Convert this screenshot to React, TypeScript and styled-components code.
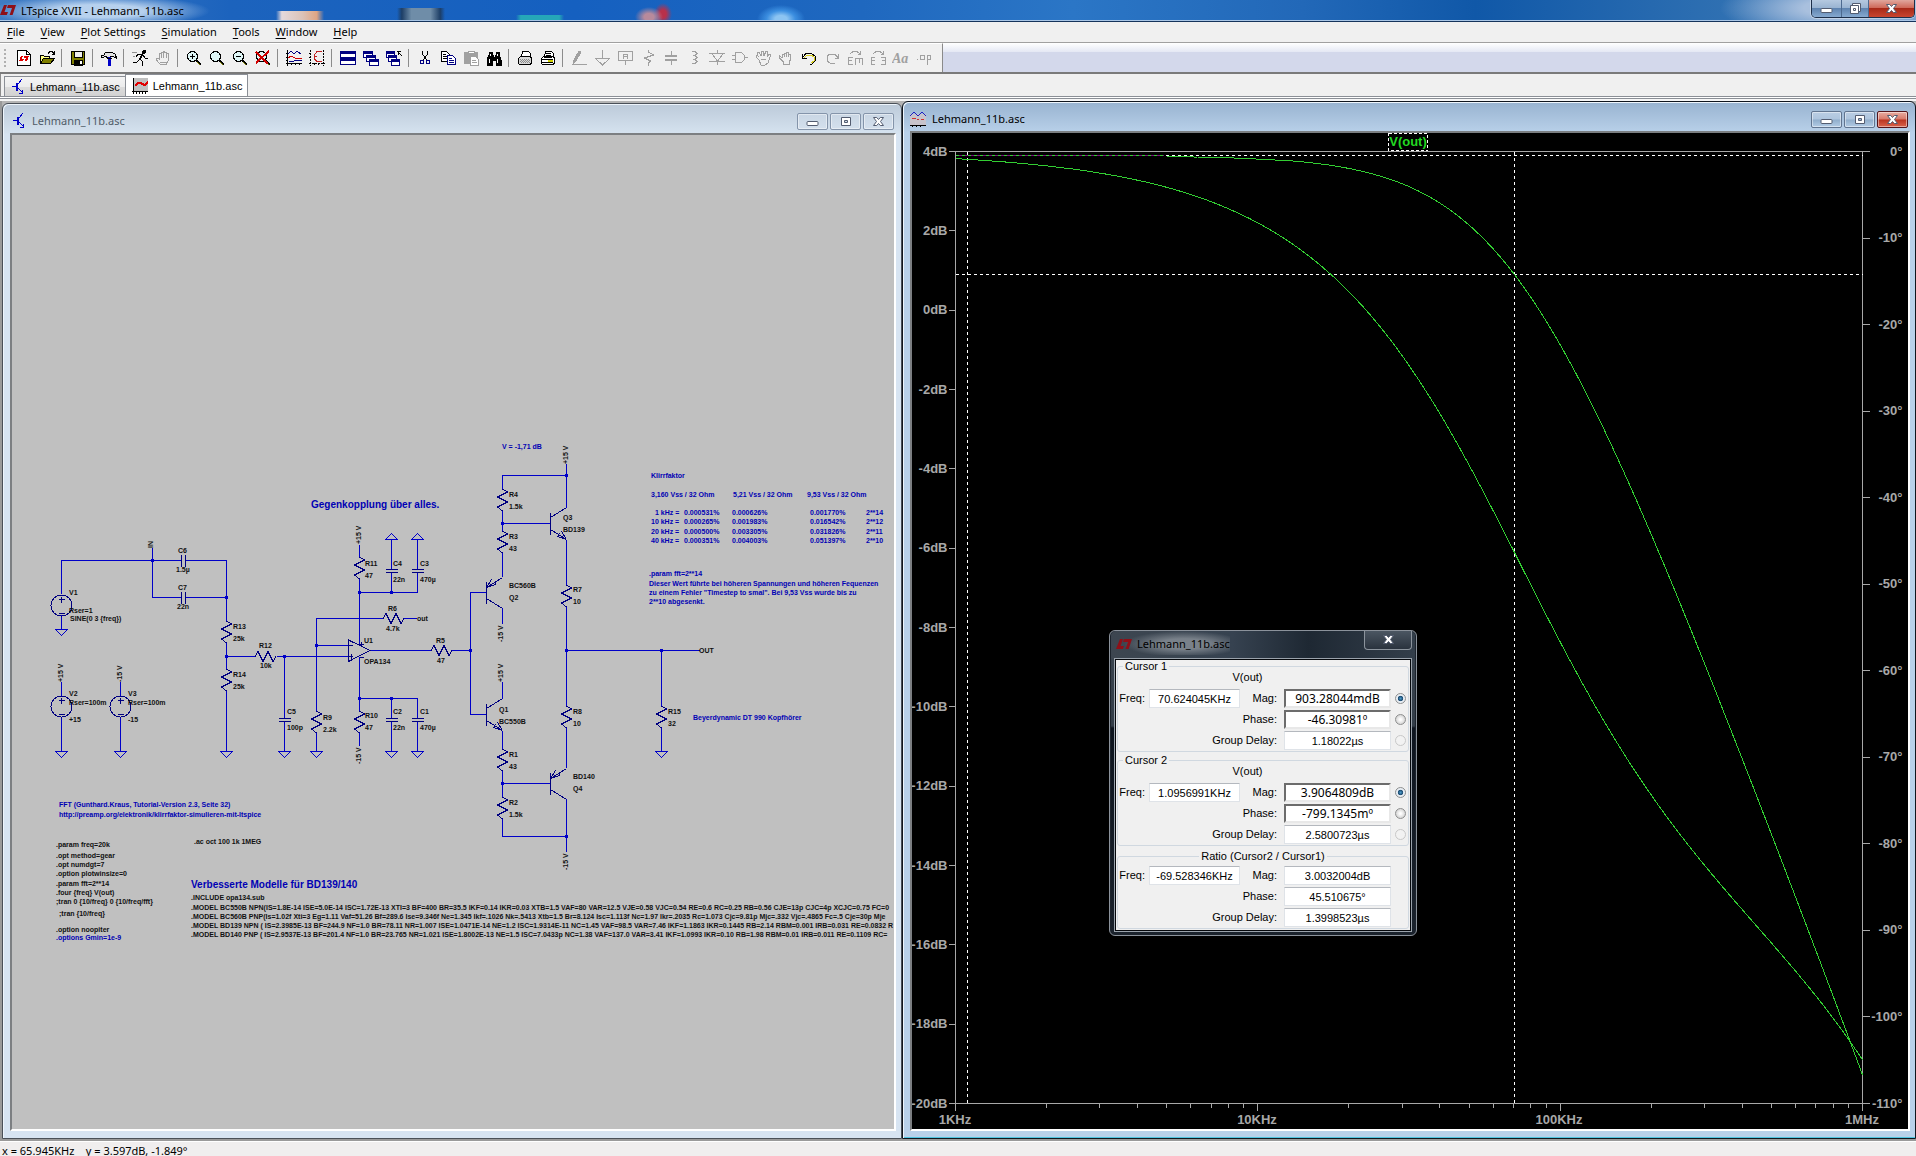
import React, { useLayoutEffect, useRef, useState } from "react";
import styled, { createGlobalStyle, css } from "styled-components";

const ui = `"Noto Sans", "Open Sans", sans-serif`;
const sans = `"Liberation Sans", Arial, sans-serif`;

const Global = createGlobalStyle`
  * { box-sizing: border-box; }
  body { margin: 0; background: #f0f0f0; overflow: hidden; font: 11px/16px ${ui}; color: #000; }
  button, input { font: inherit; color: inherit; margin: 0; }
`;

/* ---------- frame ---------- */

const Shell = styled.div`
  display: flex;
  flex-direction: column;
  height: 100vh;
  background: #f0f0f0;
`;

const TitleBar = styled.header`
  display: flex;
  justify-content: space-between;
  height: 22px;
  flex: none;
  border-bottom: 1px solid #16345c;
  box-shadow: inset 0 -1px 0 #a9c6e6;
  background:
    radial-gradient(ellipse 110px 16px at 100px 11px, rgba(190, 214, 240, 0.95) 40%, rgba(190, 214, 240, 0) 100%),
    linear-gradient(90deg, rgba(225, 215, 220, 0), #e4d9dc 12%, #dcc3b8 55%, #e0a583 85%, rgba(224, 165, 131, 0)) 276px 11px / 48px 9px no-repeat,
    linear-gradient(90deg, rgba(30, 60, 95, 0), #1d3e66 10%, #6f8da8 30%, #6f8da8 70%, #1d3e66 90%, rgba(30, 60, 95, 0)) 397px 8px / 48px 12px no-repeat,
    linear-gradient(90deg, rgba(37, 167, 184, 0), #25a7b8 10%, #25a7b8 90%, rgba(37, 167, 184, 0)) 516px 15px / 48px 5px no-repeat,
    radial-gradient(ellipse 14px 10px at 649px 17px, #b88a9c 35%, rgba(176, 100, 130, 0) 100%),
    radial-gradient(ellipse 9px 11px at 663px 14px, #b8304a 35%, rgba(176, 48, 74, 0) 100%),
    radial-gradient(ellipse 24px 14px at 781px 19px, #8cc4f2 25%, #3b8ee0 60%, rgba(40, 120, 210, 0) 100%),
    radial-gradient(ellipse 120px 30px at 1840px 8px, #a9c0de 30%, rgba(150, 180, 220, 0) 100%),
    linear-gradient(90deg, #3f7cc4 0, #1c63bd 12%, #1560c0 30%, #1f68bf 45%, #2b76c6 56%, #2268b8 68%, #1058a8 77%, #2f70b2 90%, #5d8fc6 100%);
`;

const TitleText = styled.h1`
  display: flex;
  align-items: center;
  gap: 5px;
  margin: 0;
  font: 400 11px/20px ${ui};
`;

const CaptionGroup = styled.div`
  display: flex;
  height: 18px;
  margin-right: 1px;
  border: 1px solid #1d2f4a;
  border-top: 0;
  border-radius: 0 0 5px 5px;
  overflow: hidden;
  box-shadow: 0 0 0 1px rgba(255, 255, 255, 0.35);
`;

const CaptionButton = styled.button<{ $w: number; $danger?: boolean }>`
  display: grid;
  place-items: center;
  width: ${(p) => p.$w}px;
  padding: 0;
  border: 0;
  border-left: 1px solid #4d6a90;
  background: ${(p) =>
    p.$danger
      ? "linear-gradient(#e0a79d 0, #cf6a5a 45%, #a82a18 50%, #c8452f 100%)"
      : "linear-gradient(#b5c9e0 0, #9ab4d2 45%, #5f84b0 50%, #86a9d0 100%)"};
  &:first-child { border-left: 0; }
`;

const MenuBar = styled.nav`
  display: flex;
  gap: 2px;
  height: 21px;
  flex: none;
  border-bottom: 1px solid #a0a0a0;
`;

const MenuItem = styled.button`
  padding: 0 7px;
  border: 0;
  background: none;
  line-height: 18px;
  u { text-underline-offset: 2px; }
`;

const ToolRow = styled.div`
  display: flex;
  height: 31px;
  flex: none;
  border-bottom: 2px solid #7a7a7a;
  background: linear-gradient(#fff 0, #e4e8f4 9px, #d3d8eb 9px, #d3d8eb 100%);
`;

const ToolBar = styled.div`
  display: flex;
  align-items: center;
  padding: 0 7px 0 4px;
  border-top: 1px solid #fff;
  border-right: 1px solid #8a8a8a;
  background: #f0f0f0;
`;

const Grip = styled.span`
  width: 2px;
  height: 18px;
  margin-right: 6px;
  background: repeating-linear-gradient(#b0b0b0 0 2px, transparent 2px 4px);
`;

const ToolButton = styled.button`
  display: grid;
  place-items: center;
  width: 23px;
  height: 22px;
  padding: 0;
  border: 0;
  background: none;
  color: #000;
  &:disabled { color: #a0a0a0; }
`;

const Divider = styled.span`
  width: 1px;
  height: 18px;
  margin: 0 4px 0 3px;
  background: #8c8c8c;
`;

const TabStrip = styled.div`
  display: flex;
  align-items: flex-end;
  height: 23px;
  flex: none;
  padding-left: 3px;
  border-left: 1px solid #8c8c8c;
  border-bottom: 1px solid #8b8f96;
`;

const Tab = styled.button<{ $active?: boolean }>`
  display: flex;
  align-items: center;
  gap: 5px;
  height: ${(p) => (p.$active ? 22 : 20)}px;
  padding: 0 5px 0 6px;
  border: 1px solid #8b8f96;
  border-bottom: 0;
  background: ${(p) => (p.$active ? "#fff" : "linear-gradient(#f4f4f4 0, #ececec 50%, #dcdcdc 51%, #d2d2d2 100%)")};
  font: 11px/16px ${sans};
  & + & { margin-left: -1px; }
`;

const Seam = styled.div`
  height: 4px;
  flex: none;
  border-top: 1px solid #fff;
  border-bottom: 2px solid #f6f6f6;
  background: #8b8f96;
`;

const Workspace = styled.main`
  display: grid;
  grid-template-columns: minmax(0, 900px) minmax(0, 1fr);
  flex: 1;
  min-height: 0;
  border-left: 2px solid #9a9a9a;
  background: #b4b4b4;
`;

const ChildWindow = styled.section<{ $active?: boolean }>`
  display: flex;
  flex-direction: column;
  min-height: 0;
  min-width: 0;
  margin-top: ${(p) => (p.$active ? 0 : 2)}px;
  padding: 0 5px 7px 7px;
  border: 1px solid ${(p) => (p.$active ? "#10161e" : "#4a5058")};
  border-radius: 6px 6px 0 0;
  background: ${(p) =>
    p.$active
      ? "linear-gradient(#98b3d0 0, #b7cfe8 29px, #b9d1ea 30px)"
      : "linear-gradient(#bccad9 0, #d5e2ef 29px, #d7e4f2 30px)"};
  box-shadow: inset 1px 1px 0 #eef5fc${(p) => (p.$active ? ", inset 0 -1px 0 #4fc4e0" : "")};
`;

const WindowHead = styled.header<{ $active?: boolean }>`
  display: flex;
  align-items: center;
  gap: 6px;
  height: 29px;
  flex: none;
  padding: 5px 2px 0 ${(p) => (p.$active ? 0 : 2)}px;
  color: ${(p) => (p.$active ? "#000" : "#505c68")};
`;

const WindowName = styled.h2`
  flex: 1;
  margin: 0;
  font: 400 11px/16px ${ui};
`;

const MdiButtons = styled.div`
  display: flex;
  gap: 2px;
`;

const MdiButton = styled.button<{ $active?: boolean; $danger?: boolean }>`
  display: grid;
  place-items: center;
  width: 31px;
  height: 17px;
  padding: 0;
  border-radius: 2px;
  border: 1px solid #8494aa;
  box-shadow: inset 0 0 0 1px rgba(255, 255, 255, 0.45);
  background: linear-gradient(#c9d6e4, #d4e0ed);
  ${(p) =>
    p.$active &&
    css`
      border-color: #60748f;
      background: linear-gradient(#b9cde3 0, #aec5de 48%, #8fadcb 52%, #b2cbe5 100%);
    `}
  ${(p) =>
    p.$danger &&
    css`
      border-color: #54141a;
      background: linear-gradient(#e8ada2 0, #d8796a 48%, #b93420 52%, #d9634c 100%);
    `}
`;

const Client = styled.div<{ $dark?: boolean }>`
  position: relative;
  flex: 1;
  min-height: 0;
  overflow: hidden;
  border: 2px solid #fff;
  border-top-color: #7c7f82;
  border-left-color: #7c7f82;
  background: ${(p) => (p.$dark ? "#000" : "#c0c0c0")};
`;

const StatusBar = styled.footer`
  height: 18px;
  flex: none;
  margin-bottom: -1px;
  border-top: 2px solid #9a9a9a;
  box-shadow: inset 0 1px 0 #fff;
  background: #f0eeee;
  padding: 2px 2px 0;
  overflow: hidden;
  white-space: pre;
`;

/* ---------- glyphs ---------- */

const Svg16 = ({ children }: { children: React.ReactNode }) => (
  <svg width="16" height="16" viewBox="0 0 16 16" fill="none" stroke="currentColor" shapeRendering="crispEdges" aria-hidden="true">
    {children}
  </svg>
);

const Logo = () => (
  <svg width="16" height="11" viewBox="0 0 16 11" aria-hidden="true">
    <path fill="#8e1018" d="M4 0h3L4.500 7H8L6.800 10H0zM8 0h8l-3.400 10H9.600L12 3H7z" />
  </svg>
);

const Bjt = () => (
  <svg width="14" height="16" viewBox="0 0 14 16" stroke="#0000c8" fill="none" shapeRendering="crispEdges" aria-hidden="true">
    <path d="M1 7.500h5" />
    <path d="M6 4v8" strokeWidth="2" />
    <path d="M7 5l4-5M7 9l5 5M11.500 11v4M8 14.500h4" />
  </svg>
);

const WaveIcon = () => (
  <svg width="16" height="16" viewBox="0 0 16 16" fill="none" shapeRendering="crispEdges" aria-hidden="true">
    <rect x="1" width="15" height="14" fill="#c0c0c0" />
    <path d="M1.500 0v16M0 13.500h16M4.500 14v2M7.500 14v2M10.500 14v2M13.500 14v2" stroke="#000" />
    <path d="M3 8l3-3h3l3 2h1l3-3" stroke="#e00000" strokeWidth="2" />
  </svg>
);

const PlotIcon = () => (
  <svg width="16" height="16" viewBox="0 0 16 16" fill="none" shapeRendering="crispEdges" aria-hidden="true">
    <rect y="3" width="16" height="11" fill="#c8c4cc" />
    <path d="M0 5l4-4 4 4 4-4 4 4" stroke="#2020c0" />
    <path d="M2 7.500h4M7 8.500h2M11 8.500h3" stroke="#d03030" />
    <path d="M0 14.500h16M2.500 15v1M6.500 15v1M10.500 15v1" stroke="#000" />
  </svg>
);

const MinGlyph = () => (
  <svg width="13" height="11" viewBox="0 0 13 11" aria-hidden="true">
    <rect x="1" y="5.500" width="11" height="4" rx="1" fill="#fff" stroke="#535c70" />
  </svg>
);
const MaxGlyph = () => (
  <svg width="12" height="11" viewBox="0 0 12 11" fill="#fff" stroke="#535c70" aria-hidden="true">
    <path fillRule="evenodd" d="M1.500 1.500h9v8h-9zM4.500 4.500v2h3v-2z" />
  </svg>
);
const RestoreGlyph = () => (
  <svg width="13" height="13" viewBox="0 0 13 13" fill="#fff" stroke="#535c70" aria-hidden="true">
    <path d="M3.500 1.500h8v8h-8z" />
    <path fillRule="evenodd" d="M1.500 3.500h8v8h-8zM4.500 6.500v2h2v-2z" />
  </svg>
);
const CloseGlyph = () => (
  <svg width="13" height="11" viewBox="0 0 13 11" fill="#fff" stroke="#535c70" aria-hidden="true">
    <path d="M1.500 1.500h3.200l1.800 2 1.800-2h3.200L8.500 5.500l3 4H8.300l-1.800-2-1.800 2H1.500l3-4z" />
  </svg>
);

const Magnifier = ({ children }: { children?: React.ReactNode }) => (
  <Svg16>
    <circle cx="6.500" cy="6.500" r="5" fill="#dff6f6" />
    <path d="M10 10l5 5" stroke="#000" strokeWidth="2" />
    <path d="M11 12l3 3" stroke="#808000" />
    {children}
  </Svg16>
);

const PrinterIcon = ({ ink }: { ink: boolean }) => (
  <Svg16>
    <path d="M4.500 7.500l1-6h6l2 2v4" fill="#fff" />
    <path d="M1.500 8.500l2-2h10l1 2v5l-2 1h-10l-1-1z" fill={ink ? "#fff" : "#d8d8d8"} />
    {ink ? (
      <path d="M6 3.500h5M6 5.500h5M2 9.500h11M2 12.500h11M4 7.500h8" />
    ) : (
      <path d="M3 9.500h10M3 11.500h10M4 10.500h10M4 12.500h9" stroke="#8a8a8a" strokeDasharray="1 1" />
    )}
    {ink && <path d="M8 10.500h5" stroke="#d0d000" strokeWidth="2" />}
  </Svg16>
);

const Pane = ({ x, y, w = 9, h = 6 }: { x: number; y: number; w?: number; h?: number }) => (
  <>
    <rect x={x + 0.5} y={y + 0.5} width={w} height={h} fill="#fff" stroke="#000080" />
    <path d={`M${x} ${y + 1.5}h${w + 1}`} stroke="#000080" strokeWidth="3" />
  </>
);

type Tool = { name: string; off?: boolean; art: React.ReactNode } | null;

const tools: Tool[] = [
  {
    name: "New schematic",
    art: (
      <Svg16>
        <path d="M1.500 .5h9l4 4v11h-13z" fill="#fff" />
        <path d="M10.500 .5v4h4" />
        <path d="M3 11l2-5h2l-1 3h2l-1 2zM8 6h5l-2 5H9l1-3H8z" fill="#e00000" stroke="none" />
      </Svg16>
    ),
  },
  {
    name: "Open",
    art: (
      <Svg16>
        <path d="M1.500 13.500v-8h3l1 1h5v2" fill="#ffff80" />
        <path d="M1.500 13.500l3-5h11l-4 5z" fill="#808000" />
        <path d="M9 3.500l2-2h2l2 2M15.500 1v3h-3" />
      </Svg16>
    ),
  },
  null,
  {
    name: "Save",
    art: (
      <Svg16>
        <path d="M1.500 1.500h13v13h-13z" fill="#808000" />
        <path d="M4 1.500h8v6h-8z" fill="#f0f0f0" />
        <path d="M4 10h8v5h-8z" fill="#000" />
        <path d="M10.500 11v3" stroke="#fff" strokeWidth="2" />
      </Svg16>
    ),
  },
  null,
  {
    name: "Control panel",
    art: (
      <Svg16>
        <path d="M.5 5.500h2l2-3h7l3 2 1 4-3-2h-3v1h-4v-1h-2l-1 1h-2z" fill="#e4e4e4" />
        <path d="M8.500 7v9" stroke="#0000c8" strokeWidth="3" />
        <path d="M6 8.500h5" />
      </Svg16>
    ),
  },
  null,
  {
    name: "Run",
    art: (
      <Svg16>
        <circle cx="12" cy="2" r="1.500" fill="#000" />
        <path d="M11 4l-3 5 3 3-1 4M8 9l-3 3H1M10 5L6 4 4 7M11 5l2 3h3" />
        <path d="M10 5l-2 4" strokeWidth="2" />
        <path d="M0 2.500h5M1 6.500h2" stroke="#909090" />
      </Svg16>
    ),
  },
  {
    name: "Halt",
    off: true,
    art: (
      <Svg16>
        <path d="M4.500 9V3.500h2V2h2V1h1v1h2v1.500h2V10l-2 4.500h-6L1.500 10V8h2l1 2M6.500 3v5M8.500 2v6M11.500 3v5M5 12.500h7" />
      </Svg16>
    ),
  },
  null,
  { name: "Zoom in", art: <Magnifier><path d="M4 6.500h5M6.500 4v5" /></Magnifier> },
  { name: "Zoom area", art: <Magnifier /> },
  { name: "Zoom out", art: <Magnifier><path d="M4 6.500h5" /></Magnifier> },
  { name: "Zoom full", art: <Magnifier><path d="M1 2l12 12M14 1L1 13" stroke="#d00000" strokeWidth="2" /></Magnifier> },
  null,
  {
    name: "Autorange",
    art: (
      <Svg16>
        <path d="M1.500 0v16M0 13.500h16M0 3.500h2M0 7.500h2M0 10.500h2M5.500 13v2M9.500 13v2M13.500 13v2" />
        <path d="M2 4l3-3 3 3 3-3 4 3M3 11h5l3-1h5" stroke="#000080" />
        <path d="M2 8l3-2 4 2h7" stroke="#d00000" />
      </Svg16>
    ),
  },
  {
    name: "Plot limits",
    art: (
      <Svg16>
        <path d="M1.500 0v16M0 13.500h16M0 3.500h2M0 7.500h2M5.500 13v2M9.500 13v2M14.500 0v16" strokeDasharray="2 1" />
        <path d="M13 1.500h-5l-3 4v3l3 3h5M5 6.500h3" stroke="#c02020" />
      </Svg16>
    ),
  },
  null,
  { name: "Tile", art: <Svg16><Pane x={0} y={1} w={15} h={6} /><Pane x={0} y={8} w={15} h={6} /></Svg16> },
  { name: "Cascade", art: <Svg16><Pane x={0} y={1} /><Pane x={3} y={5} /><Pane x={6} y={9} /></Svg16> },
  {
    name: "Close all",
    art: <Svg16><Pane x={0} y={1} w={8} /><Pane x={2} y={5} w={8} /><Pane x={5} y={9} w={8} /><path d="M11 1.500h4M12.500 1v4M12 2l4 4" /></Svg16>,
  },
  null,
  {
    name: "Cut",
    art: (
      <Svg16>
        <path d="M5.500 1v3l4 6M10.500 1v3l-4 6" />
        <circle cx="5" cy="12" r="2" stroke="#000080" />
        <circle cx="11" cy="12" r="2" stroke="#000080" />
      </Svg16>
    ),
  },
  {
    name: "Copy",
    art: (
      <Svg16>
        <path d="M1.500 1.500h5l3 3v7h-8z" fill="#fff" />
        <path d="M3 4.500h3M3 6.500h5M3 8.500h5" />
        <path d="M7.500 5.500h5l3 3v6h-8z" fill="#fff" stroke="#000080" />
        <path d="M9 8.500h3M9 10.500h5M9 12.500h5" stroke="#000080" />
      </Svg16>
    ),
  },
  {
    name: "Paste",
    off: true,
    art: (
      <Svg16>
        <path d="M1.500 2.500h13v11h-13z" fill="#a0a0a0" />
        <path d="M5 1.500h6v2H5z" fill="#fff" />
        <path d="M7.500 6.500h5l3 3v6h-8z" fill="#fff" />
        <path d="M9 10.500h4M9 12.500h5" />
      </Svg16>
    ),
  },
  {
    name: "Find",
    art: (
      <Svg16>
        <path d="M3 2h3v3h1v2h2V5h1V2h3v3l2 5v5h-5v-5H6v5H1v-5l2-5z" fill="#000" />
        <path d="M3.500 9v4M11.500 9v4M4.500 4v2M11.500 4v2" stroke="#fff" />
      </Svg16>
    ),
  },
  null,
  { name: "Print setup", art: <PrinterIcon ink={false} /> },
  { name: "Print", art: <PrinterIcon ink /> },
  null,
  { name: "Wire", off: true, art: <Svg16><path d="M8 1l-5 9-1 4 3-3 5-9z" fill="#a0a0a0" /><path d="M2 14.500h14" /></Svg16> },
  { name: "Ground", off: true, art: <Svg16><path d="M8.500 0v8M1 8.500h15M2 9l6.500 6L15 9" /></Svg16> },
  {
    name: "Label net",
    off: true,
    art: <Svg16><path d="M1.500 1.500h14v9h-14zM8.500 11v4M6.500 9V4.500h4V9M6 6.500h5" /></Svg16>,
  },
  { name: "Resistor", off: true, art: <Svg16><path d="M8.500 0v2l5 3-9 3 6 3-2 2v3" /></Svg16> },
  { name: "Capacitor", off: true, art: <Svg16><path d="M8.500 1v5M8.500 10v5" /><path d="M2 6h12M2 10h12" strokeWidth="2" /></Svg16> },
  { name: "Inductor", off: true, art: <Svg16><path d="M6 1.500h3l2 2-2 2H7h2l2 2-2 2H7h2l2 2-2 2H6" /></Svg16> },
  { name: "Diode", off: true, art: <Svg16><path d="M0 3.500h16M0 11.500h16M8.500 0v4M8.500 11v4M3 4l5.500 7L14 4" /></Svg16> },
  { name: "Component", off: true, art: <Svg16><path d="M3.500 2.500h6l3 3v4l-3 3h-6zM0 5.500h3M0 9.500h3M13 7.500h3" /></Svg16> },
  {
    name: "Move",
    off: true,
    art: <Svg16><path d="M4 10L1 7V5l2 1-1-4h2l2 4V1h2l1 5 2-5h2l-1 6 2-3h1v3l-2 6-3 2H6zM6 9h5" /></Svg16>,
  },
  { name: "Drag", off: true, art: <Svg16><path d="M4.500 8V4.500h2V3h2v-.500h2V4h2v5l-1 3v2h-6v-2l-4-4V6l3 2M6.500 4v3M8.500 4v3M10.500 4v3" /></Svg16> },
  {
    name: "Undo",
    art: <Svg16><path d="M3 8l3-3h4l3 2v4l-3 2" stroke="#d8d020" /><path d="M2 7l3-3.500h5l4 2.500v5l-3 3H9M1.500 4v4.500H6" /></Svg16>,
  },
  { name: "Redo", off: true, art: <Svg16><path d="M14 8l-3-4H6L3 6v5l3 2h5M14.500 4v4h-4" /></Svg16> },
  {
    name: "Mirror",
    off: true,
    art: <Svg16><path d="M3 4l3-2.500h4L13 4M13.500 1v3h-3M6 7.500H1.500v7H6M2 10.500h3M8.500 15V8.500h7V15M12 9v4" /></Svg16>,
  },
  {
    name: "Rotate",
    off: true,
    art: <Svg16><path d="M3 4l3-2.500h4L13 4M13.500 1v3h-3M5 7.500H1.500v7H5M2 10.500h3M11 7.500h4v7h-4M15 10.500h-3" /></Svg16>,
  },
  {
    name: "Text",
    off: true,
    art: (
      <svg width="18" height="16" viewBox="0 0 18 16" aria-hidden="true">
        <text x="0" y="13" fill="currentColor" fontFamily="Liberation Serif, serif" fontSize="14" fontWeight="700" fontStyle="italic">Aa</text>
      </svg>
    ),
  },
  {
    name: "SPICE directive",
    off: true,
    art: <Svg16><path d="M1 9.500h1M4.500 5.500h4v4h-4zM11.500 5v10M11.500 5.500h3v4h-3" /></Svg16>,
  },
];

const ToolIcons = () => (
  <ToolBar role="toolbar" aria-label="Main">
    <Grip />
    {tools.map((t, i) =>
      t ? (
        <ToolButton key={i} aria-label={t.name} disabled={t.off}>
          {t.art}
        </ToolButton>
      ) : (
        <Divider key={i} />
      ),
    )}
  </ToolBar>
);

/* ---------- schematic ---------- */

const Sheet = styled.svg`
  display: block;
  width: 100%;
  height: 100%;
  fill: none;
  font: 700 7px ${sans};
  .wire { stroke: #0000c8; }
  .part { stroke: #000080; }
  .dot { fill: #0000c8; }
  text { fill: #101010; }
  text.note { fill: #0000b4; }
  text.big { font-size: 10px; fill: #0000b4; }
`;

const ResV = ({ x, y }: { x: number; y: number }) => (
  <path className="part" d={`M${x} ${y}l5 3-10 5 10 5-10 5 5 4`} />
);
const ResH = ({ x, y }: { x: number; y: number }) => (
  <path className="part" d={`M${x} ${y}l3-5 5 10 5-10 5 10 3-5`} />
);
const CapV = ({ x, y }: { x: number; y: number }) => (
  <path className="part" d={`M${x - 6} ${y - 1.5}h12M${x - 6} ${y + 1.5}h12`} />
);
const CapH = ({ x, y }: { x: number; y: number }) => (
  <path className="part" d={`M${x - 2} ${y - 6}v12M${x + 2} ${y - 6}v12`} />
);
const Gnd = ({ x, y, up }: { x: number; y: number; up?: boolean }) => (
  <path className="wire" d={`M${x - 6} ${y}h12l-6 ${up ? -6 : 6}z`} />
);
const Source = ({ x, y }: { x: number; y: number }) => (
  <g className="part">
    <circle cx={x} cy={y} r="10.500" />
    <path d={`M${x - 3} ${y - 6}h6M${x} ${y - 9}v6M${x - 3} ${y + 8}h6`} />
  </g>
);
const Npn = ({ x, y }: { x: number; y: number }) => (
  <path
    className="part"
    d={`M${x} ${y - 11}v22M${x} ${y - 6}l16-10M${x} ${y + 6}l16 10M${x + 16} ${y + 16}l-9-3M${x + 16} ${y + 16}l-5-8M${x + 7} ${y + 13}l2-3`}
  />
);
const Pnp = ({ x, y }: { x: number; y: number }) => (
  <path
    className="part"
    d={`M${x} ${y - 11}v22M${x} ${y - 5}l16-10M${x} ${y + 6}l16 10M${x} ${y - 5}l5-8M${x} ${y - 5}l9-3M${x + 9} ${y - 8}v-3`}
  />
);

const wires = [
  "M61.500 594v-33.500h91M152.500 548v49.500h29M152.500 560.500h29M186 560.500h40.500v60M186 597.500h40.500M61.500 615v14",
  "M61.500 682v13.500M61.500 716.500v34M120.500 682v13.500M120.500 716.500v34",
  "M226.500 642.500v26M226.500 690.500v60M226.500 656.500h28M276.500 656.500h72M284.500 656.500v61M284.500 722v29",
  "M383 618.500h-66.500v93M316.500 733v18M316.500 645.500h32M404 618.500h13",
  "M359.500 545v13M359.500 579v65M359.500 592.500h58M391.500 540v29M391.500 573v20M417.500 540v29M417.500 573v20",
  "M359.500 657v54M359.500 698.500h58M391.500 698.500v19M391.500 722v29M417.500 698.500v19M417.500 722v29M359.500 733v13",
  "M370 650.500h61M452 650.500h18.500M486.500 592.500h-16v122h16",
  "M566.500 464v44M502.500 489v-13.500h64M502.500 510.500v21M502.500 523.500h48M502.500 553v24M502.500 608v16",
  "M502.500 682v16.500M502.500 730.500v19M502.500 771v26M502.500 783.500h48M502.500 818v18.500h64M566.500 799v53",
  "M566.500 539.500v45M566.500 606v100M566.500 650.500h133M661.500 650.500v56M661.500 728v23M566.500 728v40",
];

const dots: [number, number][] = [
  [152, 560], [226, 597], [226, 656], [284, 656], [316, 645], [359, 592], [391, 592], [359, 698], [391, 698],
  [470, 650], [566, 475], [502, 523], [566, 650], [661, 650], [502, 783], [566, 836],
];

const labels: [number, number, string][] = [
  [178, 553, "C6"], [176, 572, "1.5µ"], [178, 590, "C7"], [177, 609, "22n"],
  [69, 595, "V1"], [69, 613, "Rser=1"], [70, 621, "SINE(0 3 {freq})"],
  [233, 629, "R13"], [233, 641, "25k"], [233, 677, "R14"], [233, 689, "25k"],
  [259, 648, "R12"], [260, 668, "10k"],
  [69, 696, "V2"], [69, 705, "Rser=100m"], [69, 722, "+15"],
  [128, 696, "V3"], [128, 705, "Rser=100m"], [128, 722, "-15"],
  [287, 714, "C5"], [287, 730, "100p"], [323, 720, "R9"], [323, 732, "2.2k"],
  [365, 566, "R11"], [365, 578, "47"], [393, 566, "C4"], [393, 582, "22n"], [420, 566, "C3"], [420, 582, "470µ"],
  [388, 611, "R6"], [386, 631, "4.7k"], [417, 621, "out"],
  [364, 643, "U1"], [364, 664, "OPA134"], [436, 643, "R5"], [437, 663, "47"],
  [365, 718, "R10"], [365, 730, "47"], [393, 714, "C2"], [393, 730, "22n"], [420, 714, "C1"], [420, 730, "470µ"],
  [509, 497, "R4"], [509, 509, "1.5k"], [509, 539, "R3"], [509, 551, "43"],
  [563, 520, "Q3"], [563, 532, "BD139"], [509, 588, "BC560B"], [509, 600, "Q2"],
  [573, 592, "R7"], [573, 604, "10"], [699, 653, "OUT"],
  [499, 712, "Q1"], [499, 724, "BC550B"], [573, 714, "R8"], [573, 726, "10"],
  [668, 714, "R15"], [668, 726, "32"], [509, 757, "R1"], [509, 769, "43"],
  [573, 779, "BD140"], [573, 791, "Q4"], [509, 805, "R2"], [509, 817, "1.5k"],
  [56, 847, ".param freq=20k"], [194, 844, ".ac oct 100 1k 1MEG"], [56, 858, ".opt method=gear"],
  [56, 867, ".opt numdgt=7"], [56, 876, ".option plotwinsize=0"], [56, 886, ".param fft=2**14"],
  [56, 895, ".four {freq} V(out)"], [56, 904, ";tran 0 {10/freq} 0 {10/freq/fft}"], [59, 916, ";tran {10/freq}"],
  [56, 932, ".option noopiter"], [191, 900, ".INCLUDE opa134.sub"],
  [191, 910, ".MODEL BC550B NPN(IS=1.8E-14 ISE=5.0E-14 ISC=1.72E-13 XTI=3 BF=400 BR=35.5 IKF=0.14 IKR=0.03 XTB=1.5 VAF=80 VAR=12.5 VJE=0.58 VJC=0.54 RE=0.6 RC=0.25 RB=0.56 CJE=13p CJC=4p XCJC=0.75 FC=0"],
  [191, 919, ".MODEL BC560B PNP(Is=1.02f Xti=3 Eg=1.11 Vaf=51.26 Bf=289.6 Ise=9.346f Ne=1.345 Ikf=.1026 Nk=.5413 Xtb=1.5 Br=8.124 Isc=1.113f Nc=1.97 Ikr=.2035 Rc=1.073 Cjc=9.81p Mjc=.332 Vjc=.4865 Fc=.5 Cje=30p Mje"],
  [191, 928, ".MODEL BD139 NPN ( IS=2.3985E-13 BF=244.9 NF=1.0 BR=78.11 NR=1.007 ISE=1.0471E-14 NE=1.2 ISC=1.9314E-11 NC=1.45 VAF=98.5 VAR=7.46 IKF=1.1863 IKR=0.1445 RB=2.14 RBM=0.001 IRB=0.031 RE=0.0832 R"],
  [191, 937, ".MODEL BD140 PNP ( IS=2.9537E-13 BF=201.4 NF=1.0 BR=23.765 NR=1.021 ISE=1.8002E-13 NE=1.5 ISC=7.0433p NC=1.38 VAF=137.0 VAR=3.41 IKF=1.0993 IKR=0.10 RB=1.98 RBM=0.01 IRB=0.011 RE=0.1109 RC="],
];

const notes: [number, number, string][] = [
  [502, 449, "V = -1,71 dB"], [651, 478, "Klirrfaktor"],
  [651, 497, "3,160 Vss / 32 Ohm"], [733, 497, "5,21 Vss / 32 Ohm"], [807, 497, "9,53 Vss / 32 Ohm"],
  [655, 515, "1 kHz ="], [651, 524, "10 kHz ="], [651, 534, "20 kHz ="], [651, 543, "40 kHz ="],
  [684, 515, "0.000531%"], [684, 524, "0.000265%"], [684, 534, "0.000500%"], [684, 543, "0.000351%"],
  [732, 515, "0.000626%"], [732, 524, "0.001983%"], [732, 534, "0.003305%"], [732, 543, "0.004003%"],
  [810, 515, "0.001770%"], [810, 524, "0.016542%"], [810, 534, "0.031826%"], [810, 543, "0.051397%"],
  [866, 515, "2**14"], [866, 524, "2**12"], [866, 534, "2**11"], [866, 543, "2**10"],
  [649, 576, ".param fft=2**14"],
  [649, 586, "Dieser Wert führte bei höheren Spannungen und höheren Fequenzen"],
  [649, 595, 'zu einem Fehler "Timestep to smal". Bei 9,53 Vss wurde bis zu'],
  [649, 604, "2**10 abgesenkt."],
  [693, 720, "Beyerdynamic DT 990 Kopfhörer"],
  [59, 807, "FFT (Gunthard.Kraus, Tutorial-Version 2.3, Seite 32)"],
  [59, 817, "http://preamp.org/elektronik/klirrfaktor-simulieren-mit-ltspice"],
  [56, 940, ".options Gmin=1e-9"],
];

const rails: [number, number, string][] = [
  [153, 548, "IN"], [63, 682, "+15 V"], [122, 682, "-15 V"], [361, 544, "+15 V"], [361, 764, "-15 V"],
  [503, 642, "-15 V"], [503, 682, "+15 V"], [568, 464, "+15 V"], [568, 870, "-15 V"],
];

const Schematic = () => (
  <Sheet role="img" aria-label="Headphone amplifier schematic">
    <g transform="translate(-12 -135)">
      <g shapeRendering="crispEdges">
        {wires.map((d) => (
          <path key={d} className="wire" d={d} />
        ))}
        {dots.map(([x, y]) => (
          <rect key={`${x}-${y}`} className="dot" x={x - 1} y={y - 1} width="3" height="3" />
        ))}
        <CapH x={183.5} y={560.5} />
        <CapH x={183.5} y={597.5} />
        {[[284.5, 720], [391.5, 720], [417.5, 720], [391.5, 571], [417.5, 571]].map(([x, y]) => (
          <CapV key={`${x}-${y}`} x={x} y={y} />
        ))}
        {[61.5, 120.5, 226.5, 284.5, 316.5, 391.5, 417.5, 661.5].map((x) => (
          <Gnd key={x} x={x} y={751.5} />
        ))}
        <Gnd x={61.5} y={629.5} />
        <Gnd x={391.5} y={539.5} up />
        <Gnd x={417.5} y={539.5} up />
        {[
          [226.5, 621], [226.5, 669], [316.5, 711], [359.5, 557], [359.5, 711], [502.5, 489], [502.5, 531],
          [502.5, 749], [502.5, 797], [566.5, 585], [566.5, 706], [661.5, 706],
        ].map(([x, y]) => (
          <ResV key={`${x}-${y}`} x={x} y={y} />
        ))}
        {[[255, 656.5], [383, 618.5], [431, 650.5]].map(([x, y]) => (
          <ResH key={x} x={x} y={y} />
        ))}
        <Npn x={550.5} y={523.5} />
        <Npn x={486.5} y={714.5} />
        <Pnp x={486.5} y={592.5} />
        <Pnp x={550.5} y={783.5} />
        <path className="part" d="M348.500 640v21.500l21.500-11zM349 645.500h4M349 656.500h4M351.500 654v5M361.500 642v5M359 644.500h5M360 657.500h4" />
        <Source x={61.5} y={605.5} />
        <Source x={61.5} y={706.5} />
        <Source x={120.5} y={706.5} />
      </g>
      {labels.map(([x, y, t]) => (
        <text key={`${x}-${y}`} x={x} y={y}>{t}</text>
      ))}
      {notes.map(([x, y, t]) => (
        <text key={`${x}-${y}`} className="note" x={x} y={y}>{t}</text>
      ))}
      {rails.map(([x, y, t]) => (
        <text key={`${x}-${y}`} transform={`translate(${x} ${y}) rotate(-90)`}>{t}</text>
      ))}
      <text className="big" x="311" y="508">Gegenkopplung über alles.</text>
      <text className="big" x="191" y="888">Verbesserte Modelle für BD139/140</text>
    </g>
  </Sheet>
);

/* ---------- plot ---------- */

const PlotSvg = styled.svg`
  display: block;
  position: absolute;
  inset: 0;
  width: 100%;
  height: 100%;
  fill: none;
  font: 700 13px ${sans};
  .axis { stroke: #a8a8a8; }
  .cursor { stroke: #fff; stroke-dasharray: 3 3; }
  .trace { stroke: #32cd32; }
  text { fill: #a8a8a8; }
  text.trace-name { fill: #22d822; stroke: none; }
`;

const POLE = 70.62;
const FAR_POLE = 5500;
const OVERLAP = 4.9;
const magnitude = (f: number) => 3.908 - 10 * Math.log10(1 + (f / POLE) ** 2) - 10 * Math.log10(1 + (f / FAR_POLE) ** 2);
const phase = (f: number) => -(Math.atan(f / POLE) * 180) / Math.PI - 0.019 * f;

const BodePlot = () => {
  const ref = useRef<SVGSVGElement>(null);
  const [size, setSize] = useState({ w: 996, h: 996 });
  useLayoutEffect(() => {
    const node = ref.current;
    if (!node) return;
    const read = () => setSize({ w: Math.round(node.clientWidth) || 996, h: Math.round(node.clientHeight) || 996 });
    read();
    const watcher = new ResizeObserver(read);
    watcher.observe(node);
    return () => watcher.disconnect();
  }, []);

  const left = 43.5;
  const top = 18.5;
  const right = size.w - 45.5;
  const bottom = size.h - 25.5;
  const snap = (v: number) => Math.floor(v) + 0.5;
  const fx = (f: number) => left + ((right - left) * Math.log10(f)) / 3;
  const dbY = (db: number) => top + ((4 - db) / 24) * (bottom - top);
  const degY = (deg: number) => top + (-deg / 110) * (bottom - top);

  const samples = Array.from({ length: 301 }, (_, i) => Math.pow(10, i / 100));
  const curve = (y: (f: number) => number, from = 0) =>
    samples
      .filter((f) => f >= from)
      .map((f, i) => `${i ? "L" : "M"}${fx(f).toFixed(1)} ${y(f).toFixed(1)}`)
      .join("");

  const dbs = Array.from({ length: 13 }, (_, i) => 4 - 2 * i);
  const degs = Array.from({ length: 12 }, (_, i) => -10 * i);
  const minor = [1, 10, 100].flatMap((d) => [2, 3, 4, 5, 6, 7, 8, 9].map((n) => n * d));
  const majors: [number, string][] = [[1, "1KHz"], [10, "10KHz"], [100, "100KHz"], [1000, "1MHz"]];
  const mid = Math.floor((left + right) / 2) - 1;

  return (
    <PlotSvg ref={ref} role="img" aria-label="Magnitude and phase of V(out)">
      <g shapeRendering="crispEdges">
        <path className="axis" d={`M${left} ${top}V${bottom + 7}M${right} ${top}V${bottom + 7}M${left - 7} ${top}H${right + 7}M${left - 7} ${bottom}H${right + 7}`} />
        {dbs.map((v) => (
          <path key={v} className="axis" d={`M${left - 7} ${snap(dbY(v))}h7`} />
        ))}
        {degs.map((v) => (
          <path key={v} className="axis" d={`M${right} ${snap(degY(v))}h7`} />
        ))}
        {minor.map((f) => (
          <path key={f} className="axis" d={`M${snap(fx(f))} ${bottom}v4`} />
        ))}
        {majors.map(([f]) => (
          <path key={f} className="axis" d={`M${snap(fx(f))} ${bottom}v7`} />
        ))}
        <path className="cursor" d={`M${left} ${snap(dbY(3.9064809))}H${right}M${left} ${snap(dbY(0.90328044))}H${right}`} />
        <path className="cursor" d={`M${snap(fx(1.0956991))} ${top}V${bottom}M${snap(fx(70.624045))} ${top}V${bottom}`} />
        <path stroke="#801080" d={`M${left} ${snap(dbY(3.9064809))}H${fx(OVERLAP)}`} />
        <path className="trace" strokeDasharray="3 3" d={`M${left} ${snap(dbY(3.9064809))}H${fx(OVERLAP)}`} />
        <path className="trace" d={curve((f) => dbY(magnitude(f)) + (f < 12 ? 0.5 : 0), OVERLAP)} />
        <path className="trace" d={curve((f) => degY(phase(f)))} />
      </g>
      {dbs.map((v) => (
        <text key={v} x={left - 8} y={Math.round(dbY(v)) + 4} textAnchor="end">{v}dB</text>
      ))}
      {degs.map((v) => (
        <text key={v} x={right + 40} y={Math.round(degY(v)) + 4} textAnchor="end">{v}°</text>
      ))}
      {majors.map(([f, t]) => (
        <text key={f} x={Math.round(fx(f)) - 1} y={bottom + 20.5} textAnchor="middle">{t}</text>
      ))}
      <rect x={mid - 19.5} y="0.500" width="39" height="17" stroke="#fff" strokeDasharray="3 2" shapeRendering="crispEdges" />
      <text className="trace-name" x={mid} y="13" textAnchor="middle">V(out)</text>
    </PlotSvg>
  );
};

/* ---------- cursor dialog ---------- */

const Dialog = styled.section`
  position: absolute;
  left: 197px;
  top: 497px;
  width: 308px;
  padding: 0 5px 4px;
  border: 1px solid #8b929b;
  border-radius: 6px;
  background: linear-gradient(#3a444f 0, #333d48 95px, #0d141e 97px, #1a222c 100%);
  box-shadow: inset 0 0 0 1px #1c232c;
`;

const DialogHead = styled.header`
  display: flex;
  align-items: flex-start;
  justify-content: space-between;
  height: 28px;
  background: linear-gradient(90deg, #3d4650 0, #364250 40%, #1e2833 65%, #333e4a 100%);
  margin: 0 -4px;
  padding: 0 3px 0 5px;
  border-radius: 5px 5px 0 0;
`;

const DialogName = styled.h2`
  display: flex;
  align-items: center;
  gap: 5px;
  margin: 0;
  padding-top: 2px;
  font: 400 11px/22px ${ui};
  background: radial-gradient(ellipse 60px 13px at 68px 13px, #79818a 40%, rgba(110, 118, 126, 0) 100%);
`;

const DialogClose = styled.button`
  display: grid;
  place-items: center;
  width: 48px;
  height: 19px;
  padding: 0 0 2px;
  border: 1px solid #8c949d;
  border-top: 0;
  border-radius: 0 0 4px 4px;
  background: linear-gradient(#4b5662, #2a333e);
`;

const DialogBody = styled.div`
  padding: 0 1px 1px;
  border: 1px solid #05080c;
  outline: 1px solid #9aa2ab;
  background: #f0f0f0;
  font: 11px/13px ${sans};
`;

const Group = styled.fieldset<{ $gap: number }>`
  display: block;
  min-width: 0;
  margin: 0 0 ${(p) => p.$gap}px;
  padding: 0 0 1px;
  border: 1px solid #d0d8e0;
  border-radius: 3px;
`;

const Legend = styled.legend<{ $center?: boolean }>`
  margin-left: ${(p) => (p.$center ? "auto" : "5px")};
  margin-right: ${(p) => (p.$center ? "auto" : "0")};
  padding: 0 2px;
`;

const TraceName = styled.div`
  margin: -2px 0 5px;
  padding-right: 31px;
  text-align: center;
`;

const Rows = styled.div<{ $pad?: boolean }>`
  display: grid;
  grid-template-columns: 31px 91px 1fr 107px 17px;
  row-gap: 2px;
  align-items: center;
  padding-top: ${(p) => (p.$pad ? 3 : 0)}px;
`;

const FieldLabel = styled.label<{ $at: string; $gap: number }>`
  grid-column: ${(p) => p.$at};
  padding-right: ${(p) => p.$gap}px;
  text-align: right;
  white-space: nowrap;
`;

const Field = styled.input<{ $sunk?: boolean }>`
  width: 100%;
  min-width: 0;
  height: 19px;
  padding: 0;
  border: 1px solid #dfe3e8;
  border-top-color: #b4b8be;
  background: #fff;
  text-align: center;
  ${(p) =>
    p.$sunk &&
    css`
      border: 2px solid #e8e8e8;
      border-top-color: #6c6c6c;
      border-left-color: #6c6c6c;
      font: 12px/15px ${ui};
    `}
`;

const Radio = styled.input`
  appearance: none;
  justify-self: end;
  width: 11px;
  height: 11px;
  margin-right: 2px;
  border: 1px solid #8e8f8f;
  border-radius: 50%;
  background: radial-gradient(#fff 10%, #d0d0d0 80%);
  &:checked { background: radial-gradient(circle, #4a9ac8 0, #1c4a70 38%, #e8eef4 48%, #e8eef4 100%); }
  &:disabled { border-color: #c8c8c8; background: #f2f2f2; }
`;

const readings = [
  { id: "c1", title: "Cursor 1", gap: 2, freq: "70.624045KHz", values: ["903.28044mdB", "-46.30981º", "1.18022µs"] },
  { id: "c2", title: "Cursor 2", gap: 4, freq: "1.0956991KHz", values: ["3.9064809dB", "-799.1345mº", "2.5800723µs"] },
  { id: "ratio", title: "Ratio (Cursor2 / Cursor1)", gap: 0, freq: "-69.528346KHz", values: ["3.0032004dB", "45.510675°", "1.3998523µs"] },
];
const fieldNames = ["Mag:", "Phase:", "Group Delay:"];

const CursorDialog = () => (
  <Dialog role="dialog" aria-label="Cursor readout">
    <DialogHead>
      <DialogName><Logo />Lehmann_11b.asc</DialogName>
      <DialogClose aria-label="Close readout"><CloseGlyph /></DialogClose>
    </DialogHead>
    <DialogBody>
      {readings.map((r) => {
        const ratio = r.id === "ratio";
        return (
          <Group key={r.id} $gap={r.gap}>
            <Legend $center={ratio}>{r.title}</Legend>
            {!ratio && <TraceName>V(out)</TraceName>}
            <Rows $pad={ratio}>
              <FieldLabel $at="1" $gap={4} htmlFor={`${r.id}-freq`}>Freq:</FieldLabel>
              <Field id={`${r.id}-freq`} defaultValue={r.freq} />
              {r.values.map((value, i) => (
                <React.Fragment key={i}>
                  <FieldLabel $at={i === 0 ? "3" : "1 / 4"} $gap={7} htmlFor={`${r.id}-${i}`}>
                    {fieldNames[i]}
                  </FieldLabel>
                  <Field id={`${r.id}-${i}`} defaultValue={value} $sunk={!ratio && i < 2} />
                  {ratio ? (
                    <span />
                  ) : (
                    <Radio
                      type="radio"
                      name={`${r.id}-source`}
                      aria-label={`${r.title} ${fieldNames[i]}`}
                      defaultChecked={i === 0}
                      disabled={i === 2}
                    />
                  )}
                </React.Fragment>
              ))}
            </Rows>
          </Group>
        );
      })}
    </DialogBody>
  </Dialog>
);

const menus = ["File", "View", "Plot Settings", "Simulation", "Tools", "Window", "Help"];

const MdiControls = ({ active }: { active?: boolean }) => (
  <MdiButtons>
    <MdiButton $active={active} aria-label="Minimize"><MinGlyph /></MdiButton>
    <MdiButton $active={active} aria-label="Maximize"><MaxGlyph /></MdiButton>
    <MdiButton $active={active} $danger={active} aria-label="Close"><CloseGlyph /></MdiButton>
  </MdiButtons>
);

export default function App() {
  return (
    <>
      <Global />
      <Shell>
        <TitleBar>
          <TitleText><Logo />LTspice XVII - Lehmann_11b.asc</TitleText>
          <CaptionGroup>
            <CaptionButton $w={29} aria-label="Minimize application"><MinGlyph /></CaptionButton>
            <CaptionButton $w={27} aria-label="Restore application"><RestoreGlyph /></CaptionButton>
            <CaptionButton $w={46} $danger aria-label="Close application"><CloseGlyph /></CaptionButton>
          </CaptionGroup>
        </TitleBar>
        <MenuBar>
          {menus.map((m) => (
            <MenuItem key={m}><u>{m[0]}</u>{m.slice(1)}</MenuItem>
          ))}
        </MenuBar>
        <ToolRow><ToolIcons /></ToolRow>
        <TabStrip role="tablist">
          <Tab role="tab" aria-selected="false"><Bjt />Lehmann_11b.asc</Tab>
          <Tab role="tab" aria-selected="true" $active><WaveIcon />Lehmann_11b.asc</Tab>
        </TabStrip>
        <Seam />
        <Workspace>
          <ChildWindow>
            <WindowHead><Bjt /><WindowName>Lehmann_11b.asc</WindowName><MdiControls /></WindowHead>
            <Client><Schematic /></Client>
          </ChildWindow>
          <ChildWindow $active>
            <WindowHead $active><PlotIcon /><WindowName>Lehmann_11b.asc</WindowName><MdiControls active /></WindowHead>
            <Client $dark>
              <BodePlot />
              <CursorDialog />
            </Client>
          </ChildWindow>
        </Workspace>
        <StatusBar>x = 65.945KHz    y = 3.597dB, -1.849°</StatusBar>
      </Shell>
    </>
  );
}
